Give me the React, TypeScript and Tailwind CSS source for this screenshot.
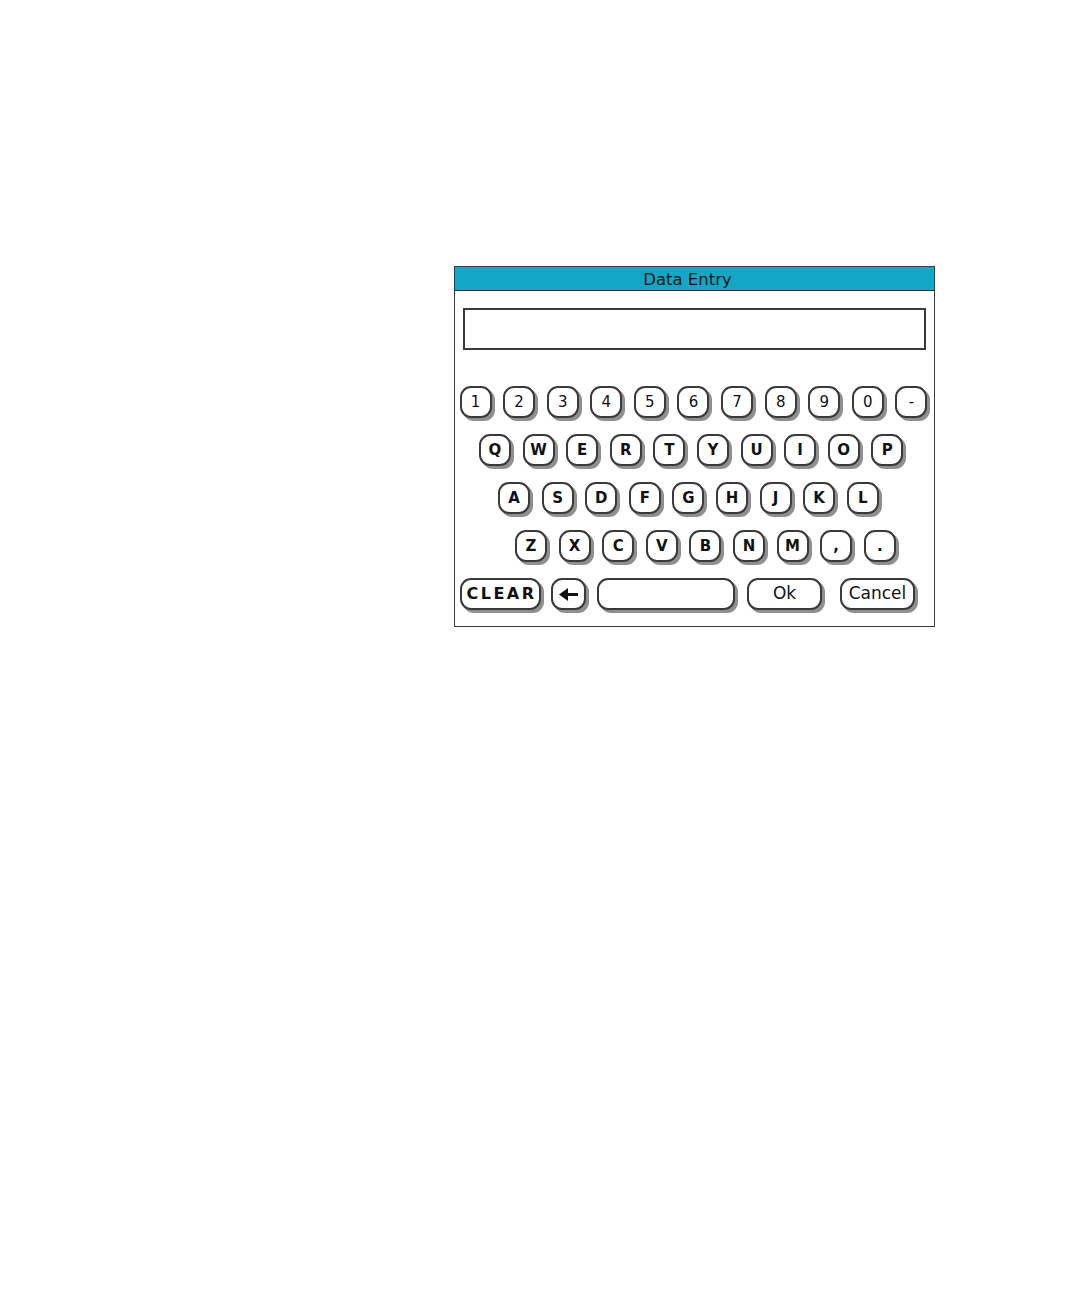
const ROWS: { keys: string[]; pad: string; bold: boolean }[] = [
  { keys: ['1', '2', '3', '4', '5', '6', '7', '8', '9', '0', '-'], pad: 'pl-[4.5px]', bold: false },
  { keys: ['Q', 'W', 'E', 'R', 'T', 'Y', 'U', 'I', 'O', 'P'], pad: 'pl-[24px]', bold: true },
  { keys: ['A', 'S', 'D', 'F', 'G', 'H', 'J', 'K', 'L'], pad: 'pl-[43px]', bold: true },
  { keys: ['Z', 'X', 'C', 'V', 'B', 'N', 'M', ',', '.'], pad: 'pl-[60px]', bold: true },
];

const KEY =
  'flex items-center justify-center h-[32px] rounded-[11px] border-2 border-[#3a3a3a] bg-white shadow-[3px_3px_0_#8f8f8f] text-[#111]';

function Key({ label, bold }: { label: string; bold: boolean }) {
  return (
    <div className={`${KEY} w-[32px] ${bold ? 'font-bold text-[15px]' : 'font-normal text-[15px]'}`}>
      {label}
    </div>
  );
}

function BackArrow() {
  return (
    <svg width="20" height="13" viewBox="0 0 20 13" aria-hidden="true">
      <path d="M0 6.5 L9 0 L9 13 Z" fill="#111" />
      <rect x="8" y="5" width="11" height="3" fill="#111" />
    </svg>
  );
}

export default function App() {
  return (
    <div className="min-h-[1296px] w-[1080px] bg-white pt-[266px] pl-[454px] font-['DejaVu_Sans',sans-serif]">
      <div className="w-[481px] h-[361px] border border-[#3c3c3c] bg-white flex flex-col">
        <div className="h-[24px] pt-[3px] pr-[14px] bg-[#12a7c7] border-b border-[#2d2d2d] flex items-center justify-center text-[16.5px] text-[#141414] leading-none">
          Data Entry
        </div>

        <div className="mt-[17px] ml-[8px] w-[463px] h-[42px] border-2 border-[#3a3a3a] bg-white" />

        <div className="mt-[36px] flex flex-col gap-[16px]">
          {ROWS.map((row, i) => (
            <div key={i} className={`flex gap-[11.6px] ${row.pad}`}>
              {row.keys.map((k) => (
                <Key key={k} label={k} bold={row.bold} />
              ))}
            </div>
          ))}

          <div className="flex pl-[5px]">
            <div className={`${KEY} w-[81px] text-[16px] font-bold tracking-[2.5px] pl-[2px]`}>CLEAR</div>
            <div className={`${KEY} w-[35px] ml-[10px]`}>
              <BackArrow />
            </div>
            <div className={`${KEY} w-[138px] ml-[11px]`} />
            <div className={`${KEY} w-[75px] ml-[12px] text-[17px]`}>Ok</div>
            <div className={`${KEY} w-[75px] ml-[18px] text-[17px]`}>Cancel</div>
          </div>
        </div>
      </div>
    </div>
  );
}
